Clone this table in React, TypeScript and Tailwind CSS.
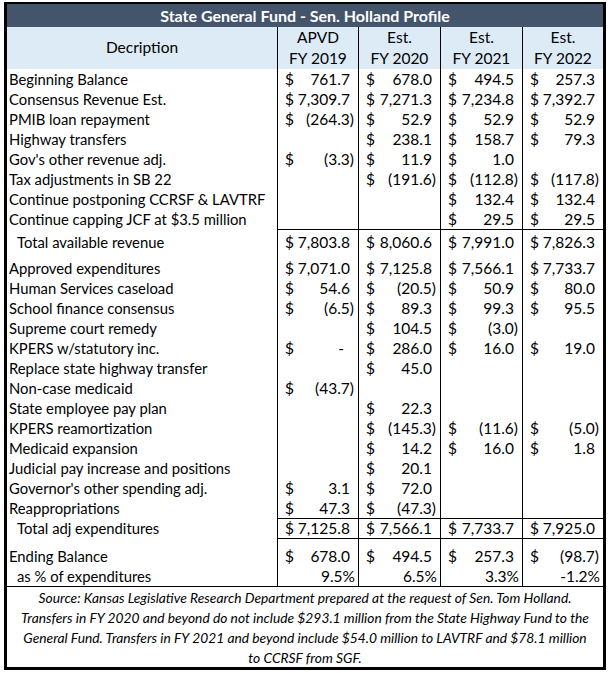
import React from "react";

type Row = { label: string; indent?: boolean; vals: (string | null)[] };

const revenue: Row[] = [
  { label: "Beginning Balance", vals: ["761.7", "678.0", "494.5", "257.3"] },
  { label: "Consensus Revenue Est.", vals: ["7,309.7", "7,271.3", "7,234.8", "7,392.7"] },
  { label: "PMIB loan repayment", vals: ["(264.3)", "52.9", "52.9", "52.9"] },
  { label: "Highway transfers", vals: [null, "238.1", "158.7", "79.3"] },
  { label: "Gov's other revenue adj.", vals: ["(3.3)", "11.9", "1.0", null] },
  { label: "Tax adjustments in SB 22", vals: [null, "(191.6)", "(112.8)", "(117.8)"] },
  { label: "Continue postponing CCRSF & LAVTRF", vals: [null, null, "132.4", "132.4"] },
  { label: "Continue capping JCF at $3.5 million", vals: [null, null, "29.5", "29.5"] },
];

const expend: Row[] = [
  { label: "Approved expenditures", vals: ["7,071.0", "7,125.8", "7,566.1", "7,733.7"] },
  { label: "Human Services caseload", vals: ["54.6", "(20.5)", "50.9", "80.0"] },
  { label: "School finance consensus", vals: ["(6.5)", "89.3", "99.3", "95.5"] },
  { label: "Supreme court remedy", vals: [null, "104.5", "(3.0)", null] },
  { label: "KPERS w/statutory inc.", vals: ["-", "286.0", "16.0", "19.0"] },
  { label: "Replace state highway transfer", vals: [null, "45.0", null, null] },
  { label: "Non-case medicaid", vals: ["(43.7)", null, null, null] },
  { label: "State employee pay plan", vals: [null, "22.3", null, null] },
  { label: "KPERS reamortization", vals: [null, "(145.3)", "(11.6)", "(5.0)"] },
  { label: "Medicaid expansion", vals: [null, "14.2", "16.0", "1.8"] },
  { label: "Judicial pay increase and positions", vals: [null, "20.1", null, null] },
  { label: "Governor's other spending adj.", vals: ["3.1", "72.0", null, null] },
  { label: "Reappropriations", vals: ["47.3", "(47.3)", null, null] },
];

const grid = "grid grid-cols-[270px_81px_82px_82px_81px]";

function NumCell({ v, extra = "" }: { v: string | null; extra?: string }) {
  if (v === null) return <div className={`border-l border-black ${extra}`} />;
  const neg = v.startsWith("(");
  const dash = v === "-";
  const pr = dash ? "pr-[14px]" : neg ? "pr-[4px]" : "pr-[8px]";
  return (
    <div className={`border-l border-black flex justify-between pl-[7px] text-[15.5px] ${pr} ${extra}`}>
      <span>$</span>
      <span>{v}</span>
    </div>
  );
}

function DataRow({ r }: { r: Row }) {
  return (
    <div className={`${grid} h-[20px] leading-[20px]`}>
      <div className={`whitespace-nowrap ${r.indent ? "pl-[10px]" : "pl-[2px]"}`}>{r.label}</div>
      {r.vals.map((v, i) => (
        <NumCell key={i} v={v} />
      ))}
    </div>
  );
}

export default function App() {
  return (
    <div
      className="bg-white w-[608px] h-[673px] pt-[2px] pl-[4px] text-black"
      style={{ fontFamily: "Lato, 'Liberation Sans', sans-serif" }}
    >
      <div className="w-[602px] border-[3px] border-t-[2px] border-black text-[14.8px]">
        <div className="h-[23px] bg-[#44546A] text-white font-bold text-[16px] leading-[23px] text-center">
          State General Fund - Sen. Holland Profile
        </div>
        <div className={`${grid} h-[42px] bg-[#DDEBF7] text-[15.5px]`}>
          <div className="flex items-center justify-center pb-[1px]">Decription</div>
          {[
            ["APVD", "FY 2019"],
            ["Est.", "FY 2020"],
            ["Est.", "FY 2021"],
            ["Est.", "FY 2022"],
          ].map(([a, b], i) => (
            <div key={i} className="border-l border-black flex flex-col items-center leading-[21px]">
              <span>{a}</span>
              <span>{b}</span>
            </div>
          ))}
        </div>
        {revenue.map((r, i) => (
          <DataRow key={i} r={r} />
        ))}
        <div className={`${grid} h-[29px] leading-[20px]`}>
          <div className="pl-[10px] pt-[3px]">Total available revenue</div>
          {["7,803.8", "8,060.6", "7,991.0", "7,826.3"].map((v, i) => (
            <NumCell key={i} v={v} extra="border-t pt-[2px]" />
          ))}
        </div>
        {expend.map((r, i) => (
          <DataRow key={i} r={r} />
        ))}
        <div className={`${grid} h-[20px] leading-[19px]`}>
          <div className="pl-[10px] pt-[1px]">Total adj expenditures</div>
          {["7,125.8", "7,566.1", "7,733.7", "7,925.0"].map((v, i) => (
            <NumCell key={i} v={v} extra="border-t" />
          ))}
        </div>
        <div className={`${grid} h-[28px] leading-[20px]`}>
          <div className="pl-[2px] pt-[8px]">Ending Balance</div>
          {["678.0", "494.5", "257.3", "(98.7)"].map((v, i) => (
            <NumCell key={i} v={v} extra="border-t pt-[7px]" />
          ))}
        </div>
        <div className={`${grid} h-[20px] leading-[20px]`}>
          <div className="pl-[10px]">as % of expenditures</div>
          {["9.5%", "6.5%", "3.3%", "-1.2%"].map((v, i) => (
            <div key={i} className="border-l border-black text-right pr-[3px] text-[15.5px]">
              {v}
            </div>
          ))}
        </div>
        <div className="border-t border-black italic text-[13.8px] leading-[20px] text-center pt-[1px] h-[81px]">
          <div className="whitespace-nowrap">
            Source: Kansas Legislative Research Department prepared at the request of Sen. Tom Holland.
          </div>
          <div className="whitespace-nowrap">
            Transfers in FY 2020 and beyond do not include $293.1 million from the State Highway Fund to the
          </div>
          <div className="whitespace-nowrap">
            General Fund. Transfers in FY 2021 and beyond include $54.0 million to LAVTRF and $78.1 million
          </div>
          <div className="whitespace-nowrap">to CCRSF from SGF.</div>
        </div>
      </div>
    </div>
  );
}
